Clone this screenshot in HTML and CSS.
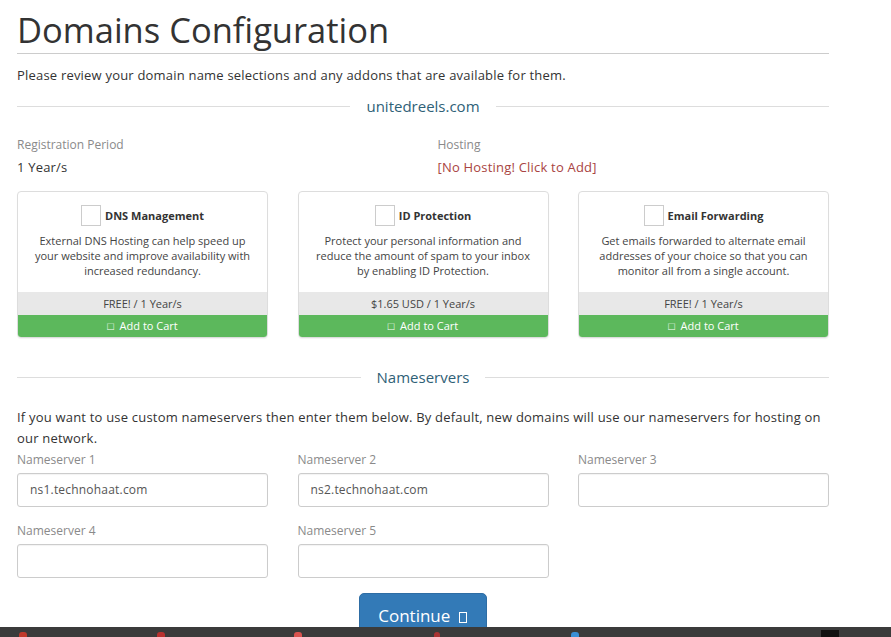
FILE: index.html
```html
<!DOCTYPE html>
<html>
<head>
<meta charset="utf-8">
<link rel="stylesheet" href="styles.css">
</head>
<body>
<div class="page">
  <h1 class="title">Domains Configuration</h1>
  <p class="intro">Please review your domain name selections and any addons that are available for them.</p>

  <div class="divider"><span>unitedreels.com</span></div>

  <div class="row2">
    <div class="field">
      <div class="lbl">Registration Period</div>
      <div class="val">1 Year/s</div>
    </div>
    <div class="field">
      <div class="lbl">Hosting</div>
      <div class="val red">[No Hosting! Click to Add]</div>
    </div>
  </div>

  <div class="row3 cards">
    <div class="card">
      <div class="card-body">
        <div class="card-head"><span class="cb"></span><b>DNS Management</b></div>
        <p>External DNS Hosting can help speed up your website and improve availability with increased redundancy.</p>
      </div>
      <div class="price">FREE! / 1 Year/s</div>
      <div class="add">&#9633;&nbsp; Add to Cart</div>
    </div>
    <div class="card">
      <div class="card-body">
        <div class="card-head"><span class="cb"></span><b>ID Protection</b></div>
        <p>Protect your personal information and reduce the amount of spam to your inbox by enabling ID Protection.</p>
      </div>
      <div class="price">$1.65 USD / 1 Year/s</div>
      <div class="add">&#9633;&nbsp; Add to Cart</div>
    </div>
    <div class="card">
      <div class="card-body">
        <div class="card-head"><span class="cb"></span><b>Email Forwarding</b></div>
        <p>Get emails forwarded to alternate email addresses of your choice so that you can monitor all from a single account.</p>
      </div>
      <div class="price">FREE! / 1 Year/s</div>
      <div class="add">&#9633;&nbsp; Add to Cart</div>
    </div>
  </div>

  <div class="divider ns"><span>Nameservers</span></div>

  <p class="nsinfo">If you want to use custom nameservers then enter them below. By default, new domains will use our nameservers for hosting on our network.</p>

  <div class="row3 inputs">
    <div class="ifield"><div class="lbl">Nameserver 1</div><div class="input">ns1.technohaat.com</div></div>
    <div class="ifield"><div class="lbl">Nameserver 2</div><div class="input">ns2.technohaat.com</div></div>
    <div class="ifield"><div class="lbl">Nameserver 3</div><div class="input"></div></div>
    <div class="ifield"><div class="lbl">Nameserver 4</div><div class="input"></div></div>
    <div class="ifield"><div class="lbl">Nameserver 5</div><div class="input"></div></div>
  </div>

  <div class="actions"><button class="continue">Continue <span class="cicon"></span></button></div>
</div>

<div class="taskbar">
  <span class="tb-i r1"></span>
  <span class="tb-i r2"></span>
  <span class="tb-i r3"></span>
  <span class="tb-i r4"></span>
  <span class="tb-i b1"></span>
  <span class="tb-i k1"></span>
</div>
</body>
</html>
```

FILE: styles.css
```css
* { box-sizing: border-box; }
html, body { margin: 0; padding: 0; background: #fff; }
body {
  font-family: "Open Sans", "Noto Sans", sans-serif;
  color: #333;
  font-size: 13px;
  overflow: hidden;
  height: 637px;
}
.page {
  width: 812px;
  margin-left: 17px;
}
.title {
  font-size: 34.5px;
  font-weight: 400;
  color: #333;
  margin: 0;
  padding-top: 8px;
  line-height: 44px;
  padding-bottom: 1px;
  border-bottom: 1px solid #ccc;
}
.intro {
  margin: 12px 0 0;
  line-height: 18px;
  letter-spacing: 0.2px;
}
.divider {
  display: flex;
  align-items: center;
  gap: 16px;
  margin-top: 12px;
  height: 20px;
  color: #2f6177;
  font-size: 15px;
}
.divider::before, .divider::after {
  content: "";
  flex: 1;
  border-top: 1px solid #ddd;
}
.row2 {
  display: grid;
  grid-template-columns: 1fr 1fr;
  column-gap: 29px;
  margin-top: 21px;
}
.lbl {
  color: #8a8a8a;
  font-size: 12px;
  line-height: 16px;
}
.val {
  margin-top: 5px;
  line-height: 18px;
  letter-spacing: 0.2px;
}
.val.red { color: #a94442; }
.row3 {
  display: grid;
  grid-template-columns: repeat(3, 1fr);
  column-gap: 29.5px;
}
.cards { margin-top: 15px; }
.card {
  border: 1px solid #ddd;
  border-radius: 4px;
  height: 147px;
  display: flex;
  flex-direction: column;
  overflow: hidden;
  box-shadow: 0 1px 1px rgba(0,0,0,.05);
}
.card-body {
  flex: 1;
  text-align: center;
  padding: 12px 15px 0;
}
.card-head {
  display: flex;
  justify-content: center;
  align-items: center;
  gap: 4px;
  font-size: 11px;
  height: 22px;
}
.card-head b { color: #333; }
.cb {
  width: 20px;
  height: 21px;
  border: 1px solid #ccc;
  background: #fff;
  display: inline-block;
}
.card-body p {
  margin: 7px 0 0;
  font-size: 11px;
  line-height: 15px;
  color: #444;
}
.price {
  background: #e8e8e8;
  height: 23px;
  line-height: 23px;
  text-align: center;
  font-size: 11px;
  color: #444;
}
.add {
  background: #5cb85c;
  color: #fff;
  height: 22px;
  line-height: 21px;
  text-align: center;
  font-size: 11px;
}
.divider.ns { margin-top: 29px; }
.nsinfo {
  margin: 20px 0 0;
  line-height: 21px;
  letter-spacing: 0.2px;
}
.inputs { row-gap: 16px; margin-top: 3px; }
.ifield .lbl { margin-bottom: 5px; }
.input {
  height: 34px;
  border: 1px solid #ccc;
  border-radius: 3px;
  padding: 0 12px;
  line-height: 32px;
  font-size: 12px;
  letter-spacing: 0.2px;
  color: #555;
  box-shadow: inset 0 1px 1px rgba(0,0,0,.05);
}
.actions {
  display: flex;
  justify-content: center;
  margin-top: 15px;
  padding-right: 1px;
}
.continue {
  background: #337ab7;
  color: #fff;
  border: 1px solid #2e6da4;
  border-radius: 5px;
  font-family: "Open Sans", "Noto Sans", sans-serif;
  font-size: 17px;
  width: 128px;
  height: 46px;
  padding: 0;
  line-height: 44px;
}
.cicon {
  display: inline-block;
  width: 8px;
  height: 11px;
  border: 1px solid #fff;
  margin-left: 4px;
  vertical-align: -1px;
}
.taskbar {
  position: fixed;
  left: 0;
  right: 0;
  bottom: 0;
  height: 10px;
  background: #3b3b3b;
}
.tb-i {
  position: absolute;
  top: 5px;
  width: 8px;
  height: 5px;
  border-radius: 3px 3px 0 0;
}
.r1 { left: 19px; background: #c0392b; }
.r2 { left: 157px; background: #b8312f; }
.r3 { left: 294px; background: #d9534f; }
.r4 { left: 434px; background: #a33; width: 6px; }
.b1 { left: 571px; background: #3a8fd6; }
.k1 { left: 821px; top: 3px; width: 18px; height: 7px; background: #111; border-radius: 0; }
```
